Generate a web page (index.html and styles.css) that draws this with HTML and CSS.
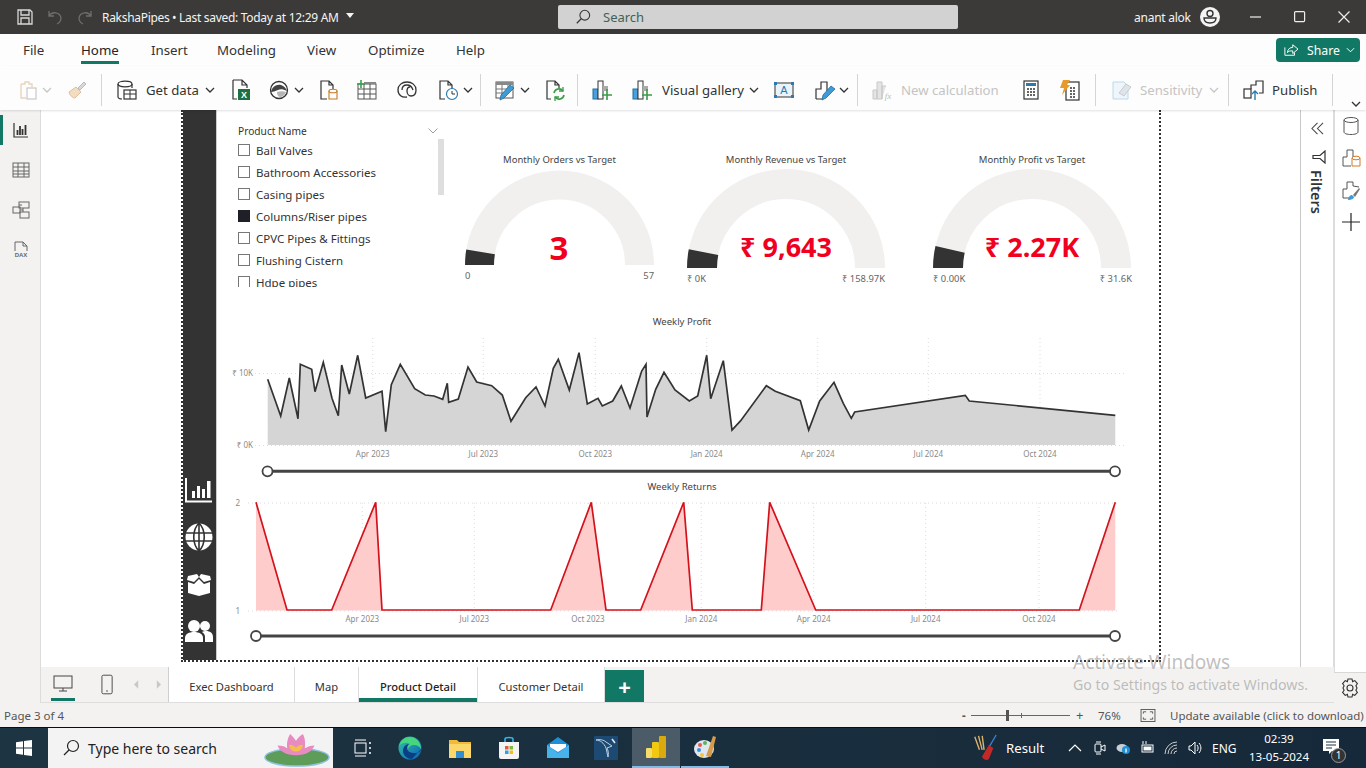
FILE: index.html
```html
<!DOCTYPE html>
<html lang="en">
<head>
<meta charset="utf-8">
<title>RakshaPipes</title>
<link rel="stylesheet" href="styles.css">
</head>
<body>
<div class="app">
  <header class="titlebar">
    <svg class="t-ic first" viewBox="0 0 18 18"><path d="M2 2h12l2 2v12H2z M5 2v5h8V2 M5 16v-6h8v6" fill="none" stroke="#d8d8d8" stroke-width="1.3"/></svg>
    <svg class="t-ic m12" viewBox="0 0 18 18"><path d="M3 3v5h5 M3 8c3-5 11-4 12 2 0 3-2 5-4 6" fill="none" stroke="#6e6e6e" stroke-width="1.3"/></svg>
    <svg class="t-ic m12" viewBox="0 0 18 18"><path d="M15 3v5h-5 M15 8c-3-5-11-4-12 2 0 3 2 5 4 6" fill="none" stroke="#6e6e6e" stroke-width="1.3"/></svg>
    <span class="doc-name">RakshaPipes</span>
    <span class="doc-saved">•&nbsp;Last saved: Today at 12:29 AM</span>
    <span class="doc-caret"></span>
    <div class="searchbox">
      <svg class="search-ic" viewBox="0 0 18 18"><circle cx="11" cy="7" r="5.5" fill="none" stroke="#333" stroke-width="1.2"/><path d="M7 11l-5 5" stroke="#333" stroke-width="1.3"/></svg>
      <span>Search</span>
    </div>
    <span class="user">anant alok</span>
    <svg class="avatar" viewBox="0 0 20 20"><circle cx="10" cy="10" r="10" fill="#f4f4f4"/><circle cx="10" cy="6.5" r="3" fill="none" stroke="#333" stroke-width="1.4"/><path d="M4 11h12c0 3.500-2.500 5-6 5s-6-1.500-6-5z" fill="none" stroke="#333" stroke-width="1.4"/></svg>
    <svg class="win-ic min" viewBox="0 0 12 12"><path d="M0 6h11" stroke="#eee" stroke-width="1.2"/></svg>
    <svg class="win-ic max" viewBox="0 0 12 12"><rect x=".6" y=".6" width="10" height="10" rx="1" fill="none" stroke="#eee" stroke-width="1.2"/></svg>
    <svg class="win-ic cls" viewBox="0 0 12 12"><path d="M.5.5l11 11M11.500.5l-11 11" stroke="#eee" stroke-width="1.2"/></svg>
  </header>

  <nav class="menubar">
    <span class="menu mi-file">File</span>
    <span class="menu mi-home active">Home</span>
    <span class="menu mi-insert">Insert</span>
    <span class="menu mi-model">Modeling</span>
    <span class="menu mi-view">View</span>
    <span class="menu mi-opt">Optimize</span>
    <span class="menu mi-help">Help</span>
    <div class="share">
      <svg class="share-ic" viewBox="0 0 18 16"><path d="M2 5v9h11v-3 M5 11c0-4 3-6 6-6V2l6 5-6 5V9c-3 0-5 0-6 2z" fill="none" stroke="#fff" stroke-width="1.100"/></svg>
      <span>Share</span>
      <svg class="share-chev" viewBox="0 0 10 6"><path d="M1 1l4 4 4-4" fill="none" stroke="#fff" stroke-width="1.100"/></svg>
    </div>
  </nav>

  <div class="toolbar">
    <svg class="ic" viewBox="0 0 22 22"><path d="M3 5h4V3h4v2h3v3 M3 5v14h5" fill="none" stroke="#e9d3b9" stroke-width="1.300"/><rect x="9" y="9" width="9" height="11" fill="#fff" stroke="#c9c9c9" stroke-width="1.200"/></svg>
    <svg class="chev m2 dim" viewBox="0 0 10 6"><path d="M1 1l4 4 4-4"/></svg>
    <svg class="ic m14" viewBox="0 0 22 22"><path d="M3 13l7-5 5 5-6 6c-2 0-5-2-6-6z" fill="#f2dcc2" stroke="#e2bf98"/><path d="M12 9l6-6 2 2-6 6z" fill="#d9d9d9" stroke="#bbb"/></svg>
    <i class="sep m13"></i>
    <svg class="ic m14" viewBox="0 0 22 22"><ellipse cx="9" cy="5" rx="7" ry="2.800" fill="none" stroke="#333" stroke-width="1.200"/><path d="M2 5v13c0 1 2 2 4 2 M16 5v4" fill="none" stroke="#333" stroke-width="1.200"/><rect x="8" y="11" width="12" height="9" fill="#fff" stroke="#333" stroke-width="1.200"/><path d="M8 15h12M14 11v9" stroke="#333"/></svg>
    <span class="lbl m8 w53">Get data</span>
    <svg class="chev m6" viewBox="0 0 10 6"><path d="M1 1l4 4 4-4"/></svg>
    <svg class="ic m15" viewBox="0 0 22 22"><path d="M3 1h9l5 5v3 M3 1v19h4 M12 1v5h5" fill="none" stroke="#333" stroke-width="1.200"/><rect x="8" y="10" width="12" height="11" fill="#1d7044"/><text class="xl" x="14" y="19" text-anchor="middle">X</text></svg>
    <svg class="ic m16" viewBox="0 0 22 22"><circle cx="11" cy="11" r="8.500" fill="none" stroke="#333" stroke-width="1.300"/><path d="M3 13c1-5 5-8 10-7 3 1 5 3 6 6-4-2-7-2-9-1-3 1-5 2-7 2z" fill="#444"/><path d="M9 13c3-1 6-1 9 0-1 3-4 5-6 5-2 0-3-3-3-5z" fill="#b5b5b5"/></svg>
    <svg class="chev m4" viewBox="0 0 10 6"><path d="M1 1l4 4 4-4"/></svg>
    <svg class="ic m14" viewBox="0 0 22 22"><path d="M9 20H3V2h8l4 4v4 M11 2v4h4" fill="none" stroke="#333" stroke-width="1.200"/><ellipse cx="15" cy="12" rx="4" ry="1.800" fill="#fff" stroke="#c77a22" stroke-width="1.100"/><path d="M11 12v8h8v-8" fill="none" stroke="#c77a22" stroke-width="1.100"/></svg>
    <svg class="ic m16" viewBox="0 0 22 22"><rect x="2" y="5" width="18" height="15" fill="#fff" stroke="#555"/><path d="M2 10h18M2 15h18M8 5v15M14 5v15" stroke="#555"/><rect x="8" y="3" width="12" height="2" fill="#888"/><path d="M5 1v8M1 5h8" stroke="#3c9e4e" stroke-width="1.600"/></svg>
    <svg class="ic m18" viewBox="0 0 22 22"><path d="M11 18c-5 1-9-2-9-7 0-5 4-8 9-8s9 3 9 8-3 6-5 6-4-2-4-5 1-4 3-4" fill="none" stroke="#333" stroke-width="1.300"/><path d="M6 11c0-3 2-5 5-5s5 2 6 5" fill="none" stroke="#333" stroke-width="1.300"/></svg>
    <svg class="ic m19" viewBox="0 0 22 22"><path d="M8 20H3V2h8l4 4v4 M11 2v4h4" fill="none" stroke="#333" stroke-width="1.200"/><circle cx="15" cy="15" r="5.500" fill="#fff" stroke="#2a7ab0" stroke-width="1.200"/><path d="M15 12v3h3" fill="none" stroke="#333"/></svg>
    <svg class="chev m4" viewBox="0 0 10 6"><path d="M1 1l4 4 4-4"/></svg>
    <i class="sep m7"></i>
    <svg class="ic m13" viewBox="0 0 22 22"><rect x="2" y="3" width="17" height="16" fill="#fff" stroke="#555"/><rect x="2" y="3" width="17" height="3" fill="#888"/><path d="M2 10h17M2 14h9M8 6v13M14 6v5" stroke="#777"/><path d="M6 21l1-5 9-10 4 3-10 10z" fill="#3f9bd6" stroke="#1f6e9f" stroke-width=".8"/></svg>
    <svg class="chev m4" viewBox="0 0 10 6"><path d="M1 1l4 4 4-4"/></svg>
    <svg class="ic m14" viewBox="0 0 22 22"><path d="M7 20H3V2h8l4 4v3 M11 2v4h4" fill="none" stroke="#333" stroke-width="1.200"/><path d="M10 14a5 5 0 0 1 9-2M20 16a5 5 0 0 1-9 2" fill="none" stroke="#3a9a45" stroke-width="1.600"/><path d="M19 8v4h-4M11 22v-4h4" fill="none" stroke="#3a9a45" stroke-width="1.300"/></svg>
    <i class="sep m11"></i>
    <svg class="ic m13" viewBox="0 0 22 22"><rect x="2" y="10" width="5" height="10" fill="#4b9fdc" stroke="#1f6e9f"/><rect x="7" y="2" width="5" height="18" fill="#fff" stroke="#333"/><rect x="12" y="7" width="5" height="5" fill="#aaa"/><path d="M16 10v11M11 16h10" stroke="#3a9a45" stroke-width="1.600"/></svg>
    <svg class="ic m18" viewBox="0 0 22 22"><rect x="2" y="10" width="5" height="10" fill="#4b9fdc" stroke="#1f6e9f"/><rect x="7" y="2" width="5" height="18" fill="#fff" stroke="#333"/><rect x="12" y="7" width="5" height="5" fill="#aaa"/><path d="M16 10v11M11 16h10" stroke="#3a9a45" stroke-width="1.600"/></svg>
    <span class="lbl m9 w82">Visual gallery</span>
    <svg class="chev m5" viewBox="0 0 10 6"><path d="M1 1l4 4 4-4"/></svg>
    <svg class="ic m14" viewBox="0 0 22 22"><rect x="2" y="4" width="18" height="14" fill="#eaf3fa" stroke="#333"/><path d="M2 4h2M18 4h2" stroke="#333"/><rect x="1" y="3" width="3" height="3" fill="#2a7ab0"/><rect x="18" y="3" width="3" height="3" fill="#2a7ab0"/><rect x="1" y="16" width="3" height="3" fill="#2a7ab0"/><rect x="18" y="16" width="3" height="3" fill="#2a7ab0"/><text class="tb-a" x="11" y="15" text-anchor="middle">A</text></svg>
    <svg class="ic m19" viewBox="0 0 22 22"><path d="M2 20V10h5V3h6v9 M2 20h7" fill="none" stroke="#333" stroke-width="1.200"/><path d="M8 21l1-5 8-9 4 3-9 9z" fill="#3f9bd6" stroke="#1f6e9f" stroke-width=".8"/></svg>
    <svg class="chev m3" viewBox="0 0 10 6"><path d="M1 1l4 4 4-4"/></svg>
    <i class="sep m8"></i>
    <svg class="ic m13" viewBox="0 0 22 22"><path d="M2 20V11h4v9zM6 20V3h5v17zM11 20V7h4" fill="#e4e4e4" stroke="#c8c8c8"/><text class="fx" x="17" y="20" text-anchor="middle">fx</text></svg>
    <span class="lbl m8 w98 off">New calculation</span>
    <svg class="ic m21" viewBox="0 0 22 22"><rect x="4" y="2" width="14" height="18" fill="#fff" stroke="#333" stroke-width="1.200"/><rect x="6" y="4" width="10" height="3" fill="#2a7ab0"/><path d="M7 10h2M10 10h2M13 10h2M7 13h2M10 13h2M13 13h2M7 16h2M10 16h2M13 16h2" stroke="#333" stroke-width="1.600"/></svg>
    <svg class="ic m17" viewBox="0 0 22 22"><rect x="7" y="3" width="13" height="18" fill="#fff" stroke="#333" stroke-width="1.200"/><path d="M11 9h2M14 9h2M11 12h2M14 12h2M11 15h2M14 15h2M11 18h2M14 18h2" stroke="#333" stroke-width="1.600"/><path d="M4 1h7L8 6h3L3 16l2-7H1z" fill="#e79a2a"/></svg>
    <i class="sep m14"></i>
    <svg class="ic m15" viewBox="0 0 22 22"><path d="M2 3h11l4 4v13H2z" fill="#eef6fb" stroke="#bcd8e8"/><path d="M8 14l7-9 5 3-7 9z" fill="#dfe4e8" stroke="#c6cdd2"/></svg>
    <span class="lbl m7 w62 off">Sensitivity</span>
    <svg class="chev m7 dim" viewBox="0 0 10 6"><path d="M1 1l4 4 4-4"/></svg>
    <i class="sep m9"></i>
    <svg class="ic m13" viewBox="0 0 22 22"><rect x="2" y="10" width="7" height="9" fill="#fff" stroke="#333" stroke-width="1.200"/><path d="M9 10V6h5V2h7v12h-4" fill="none" stroke="#333" stroke-width="1.200"/><path d="M13 21v-9M10 15l3-3 3 3" fill="none" stroke="#2a7ab0" stroke-width="1.400"/></svg>
    <span class="lbl m8 w45">Publish</span>
    <i class="sep m15"></i>
    <svg class="chev m18 collapse" viewBox="0 0 10 6"><path d="M1 1l4 4 4-4"/></svg>
  </div>

  <div class="middle">
    <aside class="leftrail">
      <svg class="rail-ic" viewBox="0 0 18 18"><path d="M2 2v14h14" fill="none" stroke="#333" stroke-width="1.200"/><path d="M5.500 14V9M8 14V5M10.500 14V8M13.500 14V4" stroke="#333" stroke-width="1.800"/></svg>
      <svg class="rail-ic" viewBox="0 0 18 18"><rect x="1" y="2" width="16" height="14" fill="none" stroke="#666"/><path d="M1 6h16M1 10h16M1 13h16M6 2v14M12 2v14" stroke="#666"/></svg>
      <svg class="rail-ic" viewBox="0 0 18 18"><rect x="7" y="1" width="10" height="6" fill="none" stroke="#666"/><rect x="1" y="6" width="7" height="6" fill="none" stroke="#666"/><rect x="8" y="11" width="9" height="6" fill="none" stroke="#666"/><path d="M7 4h3M8 9h3M11 7v4" stroke="#666"/></svg>
      <svg class="rail-ic" viewBox="0 0 18 18"><path d="M3 10V1h8l4 4v5 M11 1v4h4" fill="none" stroke="#666"/><text class="dax" x="9" y="16" text-anchor="middle">DAX</text></svg>
    </aside>

    <div class="center">
      <div class="workspace">
        <main class="canvas">
          <section class="report">
            <div class="navrail">
              <svg class="nav-ic" viewBox="0 0 30 30"><path d="M2 3v23.500h26" fill="none" stroke="#fff" stroke-width="2"/><path d="M8 16h3v7H8zM13 11h3v12h-3zM18 14h3v9h-3zM23 6h3.500v17H23z" fill="#fff"/></svg>
              <svg class="nav-ic" viewBox="0 0 30 30"><circle cx="15" cy="15" r="13.500" fill="#fff"/><path d="M1 11h28M1 19h28M15 1v28M15 1c-7 7-7 21 0 28M15 1c7 7 7 21 0 28" fill="none" stroke="#333" stroke-width="1.600"/></svg>
              <svg class="nav-ic" viewBox="0 0 30 30"><path d="M4 7l9-2 2 3-5 5-7-2zM26 7l-9-2-2 3 5 5 7-2z" fill="#fff"/><path d="M4 13l6 2 5-5 5 5 6-2v11l-11 3-11-3z" fill="#fff"/></svg>
              <svg class="nav-ic" viewBox="0 0 30 30"><circle cx="10" cy="10" r="6" fill="#fff"/><circle cx="21" cy="10" r="5" fill="#fff"/><path d="M1 26v-4c0-4 4-6 9-6s9 2 9 6v4z" fill="#fff"/><path d="M21 26v-5c0-2-1-4-3-5 1-1 3-1 4-1 4 0 7 2 7 6v5z" fill="#fff"/></svg>
            </div>
            <div class="visuals">
              <div class="toprow">
                <div class="slicer">
                  <div class="slicer-head"><span>Product Name</span><svg class="slicer-chev" viewBox="0 0 10 6"><path d="M.5.5L5 5 9.500.5"/></svg></div>
                  <div class="slicer-body">
                    <ul class="slicer-list">
                      <li><i class="cb"></i>Ball Valves</li>
                      <li><i class="cb"></i>Bathroom Accessories</li>
                      <li><i class="cb"></i>Casing pipes</li>
                      <li><i class="cb on"></i>Columns/Riser pipes</li>
                      <li><i class="cb"></i>CPVC Pipes &amp; Fittings</li>
                      <li><i class="cb"></i>Flushing Cistern</li>
                      <li><i class="cb"></i>Hdpe pipes</li>
                    </ul>
                    <i class="slicer-scroll"></i>
                  </div>
                </div>
                <svg class="gauge g1" viewBox="460 110 205 190">
                  <text class="ttl" x="559.500" y="163" text-anchor="middle">Monthly Orders vs Target</text>
                  <path class="g-bg g-w29" d="M479.500 265a80 80 0 0 1 160 0"/>
                  <path class="g-val g-w29" pathLength="180" stroke-dasharray="9.500 200" d="M479.500 265a80 80 0 0 1 160 0"/>
                  <text class="g-num g-big" x="559" y="260" text-anchor="middle">3</text>
                  <text class="g-lim" x="465" y="279">0</text>
                  <text class="g-lim" x="654" y="279" text-anchor="end">57</text>
                </svg>
                <svg class="gauge g2" viewBox="680 110 215 190">
                  <text class="ttl" x="786" y="163" text-anchor="middle">Monthly Revenue vs Target</text>
                  <path class="g-bg" d="M702 268a84 84 0 0 1 168 0"/>
                  <path class="g-val" pathLength="180" stroke-dasharray="10.900 200" d="M702 268a84 84 0 0 1 168 0"/>
                  <text class="g-num" x="786" y="257" text-anchor="middle">₹ 9,643</text>
                  <text class="g-lim" x="687" y="282">₹ 0K</text>
                  <text class="g-lim" x="885" y="282" text-anchor="end">₹ 158.97K</text>
                </svg>
                <svg class="gauge g3" viewBox="925 110 215 190">
                  <text class="ttl" x="1032" y="163" text-anchor="middle">Monthly Profit vs Target</text>
                  <path class="g-bg" d="M948 268a84 84 0 0 1 168 0"/>
                  <path class="g-val" pathLength="180" stroke-dasharray="12.900 200" d="M948 268a84 84 0 0 1 168 0"/>
                  <text class="g-num" x="1032" y="257" text-anchor="middle">₹ 2.27K</text>
                  <text class="g-lim" x="933" y="282">₹ 0.00K</text>
                  <text class="g-lim" x="1132" y="282" text-anchor="end">₹ 31.6K</text>
                </svg>
              </div>

              <svg class="chart" viewBox="220 310 910 170">
                <text class="ttl" x="682" y="325" text-anchor="middle">Weekly Profit</text>
                <path class="grid" d="M255 373.500H1126M255 445.500H1126M372.700 338V445M483.300 338V445M595.300 338V445M706.700 338V445M817.700 338V445M928.300 338V445M1040 338V445"/>
                <text class="ax" x="253" y="376" text-anchor="end">₹ 10K</text>
                <text class="ax" x="253" y="448" text-anchor="end">₹ 0K</text>
                <polygon class="area-gray" points="267.700,445 267.700,379.300 280.700,416 289.300,378 298,418.700 300.300,364.300 311.700,369.300 315,391.700 323.300,362.300 332,398.300 338.300,415.700 341.700,365 349.300,394 357.700,355.300 365.700,398 382,391.300 385.700,431.700 391.300,384.700 400.300,364.300 414.700,388.700 425.300,395 434,396 442.700,399.300 447.300,383.300 448.700,402.300 458.300,399 468,367 476.700,382 491.700,385.700 502.300,395 511,421.300 525.700,397.700 536,387 545,406 553.300,368.300 558.300,359.300 569.300,390 579,352.700 587.300,404 598,398.300 602.300,406 612.700,401 621.300,386 630,408 641.700,371 646,364.300 647,417 655.700,389.300 664,372.300 675,390 689.300,401 697.700,396 706.700,355.300 710.700,398.700 723.300,360.700 732,430 740.700,420.700 766.300,385.700 775.300,391.300 800.300,400.700 808.700,430 819.700,401 834,382.300 843.300,403.300 851.300,418.300 854.700,412 965.300,395.300 969.300,401 1115.300,415.300 1115.300,445"/>
                <polyline class="line-dark" points="267.700,379.300 280.700,416 289.300,378 298,418.700 300.300,364.300 311.700,369.300 315,391.700 323.300,362.300 332,398.300 338.300,415.700 341.700,365 349.300,394 357.700,355.300 365.700,398 382,391.300 385.700,431.700 391.300,384.700 400.300,364.300 414.700,388.700 425.300,395 434,396 442.700,399.300 447.300,383.300 448.700,402.300 458.300,399 468,367 476.700,382 491.700,385.700 502.300,395 511,421.300 525.700,397.700 536,387 545,406 553.300,368.300 558.300,359.300 569.300,390 579,352.700 587.300,404 598,398.300 602.300,406 612.700,401 621.300,386 630,408 641.700,371 646,364.300 647,417 655.700,389.300 664,372.300 675,390 689.300,401 697.700,396 706.700,355.300 710.700,398.700 723.300,360.700 732,430 740.700,420.700 766.300,385.700 775.300,391.300 800.300,400.700 808.700,430 819.700,401 834,382.300 843.300,403.300 851.300,418.300 854.700,412 965.300,395.300 969.300,401 1115.300,415.300"/>
                <text class="ax" x="372.700" y="457" text-anchor="middle">Apr 2023</text>
                <text class="ax" x="483.300" y="457" text-anchor="middle">Jul 2023</text>
                <text class="ax" x="595.300" y="457" text-anchor="middle">Oct 2023</text>
                <text class="ax" x="706.700" y="457" text-anchor="middle">Jan 2024</text>
                <text class="ax" x="817.700" y="457" text-anchor="middle">Apr 2024</text>
                <text class="ax" x="928.300" y="457" text-anchor="middle">Jul 2024</text>
                <text class="ax" x="1040" y="457" text-anchor="middle">Oct 2024</text>
                <path class="track" d="M267 471.300H1115"/>
                <circle class="knob" cx="267.500" cy="471.300" r="5"/>
                <circle class="knob" cx="1115" cy="471.300" r="5"/>
              </svg>

              <svg class="chart" viewBox="220 480 910 170">
                <text class="ttl" x="682" y="490" text-anchor="middle">Weekly Returns</text>
                <path class="grid" d="M248 503H1120M248 611H1120M362.300 503V611M474.300 503V611M588 503V611M701.300 503V611M813.700 503V611M925.700 503V611M1039 503V611"/>
                <text class="ax" x="240" y="506" text-anchor="end">2</text>
                <text class="ax" x="240" y="614" text-anchor="end">1</text>
                <polygon class="area-red" points="256,610.500 256,502.300 287,610 331.700,610 375.700,502.300 382,610 550.700,610 591.300,502.300 606,610 640.700,610 683.700,502.300 692.300,610 761.300,610 769.700,502.300 815.700,610 1079.300,610 1115.300,502.300 1115.300,610.500"/>
                <polyline class="line-red" points="256,502.300 287,610 331.700,610 375.700,502.300 382,610 550.700,610 591.300,502.300 606,610 640.700,610 683.700,502.300 692.300,610 761.300,610 769.700,502.300 815.700,610 1079.300,610 1115.300,502.300"/>
                <text class="ax" x="362.300" y="622" text-anchor="middle">Apr 2023</text>
                <text class="ax" x="474.300" y="622" text-anchor="middle">Jul 2023</text>
                <text class="ax" x="588" y="622" text-anchor="middle">Oct 2023</text>
                <text class="ax" x="701.300" y="622" text-anchor="middle">Jan 2024</text>
                <text class="ax" x="813.700" y="622" text-anchor="middle">Apr 2024</text>
                <text class="ax" x="925.700" y="622" text-anchor="middle">Jul 2024</text>
                <text class="ax" x="1039" y="622" text-anchor="middle">Oct 2024</text>
                <path class="track" d="M256 636H1115"/>
                <circle class="knob" cx="256" cy="636" r="5"/>
                <circle class="knob" cx="1115" cy="636" r="5"/>
              </svg>
            </div>
          </section>
        </main>
        <aside class="filters">
          <svg class="filters-ic" viewBox="0 0 14 14"><path d="M7 1L1 7l6 6M13 1L7 7l6 6" fill="none" stroke="#444" stroke-width="1.100"/></svg>
          <svg class="filters-fn" viewBox="0 0 14 14"><path d="M13 1v12L8 8.500H1v-3h7z" fill="none" stroke="#333" stroke-width="1.200"/></svg>
          <span class="filters-text">Filters</span>
        </aside>
      </div>

      <div class="tabbar">
        <div class="tab-tools">
          <div class="tool-desktop">
            <svg class="tool-ic" viewBox="0 0 20 20"><rect x="1" y="3" width="18" height="12" fill="none" stroke="#444"/><path d="M10 15v3M6 18h8" stroke="#444"/></svg>
          </div>
          <svg class="tool-phone" viewBox="0 0 14 22"><rect x="1" y="1" width="11" height="20" rx="1.500" fill="none" stroke="#444"/><path d="M5.500 18h2" stroke="#444"/></svg>
          <svg class="tool-arrow" viewBox="0 0 6 10"><path d="M5 0v10L0 5z"/></svg>
          <svg class="tool-arrow ar2" viewBox="0 0 6 10"><path d="M1 0v10l5-5z"/></svg>
        </div>
        <div class="tab t1">Exec Dashboard</div>
        <div class="tab t2">Map</div>
        <div class="tab t3 current">Product Detail</div>
        <div class="tab t4">Customer Detail</div>
        <div class="tab-add">+</div>
      </div>
    </div>

    <aside class="rightcol">
      <svg class="rc-ic" viewBox="0 0 20 20"><ellipse cx="10" cy="4" rx="7" ry="2.500" fill="none" stroke="#555"/><path d="M3 4v12c0 1.500 3 2.500 7 2.500s7-1 7-2.500V4" fill="none" stroke="#555"/></svg>
      <svg class="rc-ic" viewBox="0 0 20 20"><path d="M2 18V9h4V2h6v7 M2 18h8" fill="none" stroke="#555"/><ellipse cx="15" cy="10" rx="4" ry="1.800" fill="none" stroke="#d47a2a"/><path d="M11 10v8h8v-8" fill="none" stroke="#d47a2a"/></svg>
      <svg class="rc-ic" viewBox="0 0 20 20"><path d="M2 18V9h4V2h6v4l6 1 M2 18h6" fill="none" stroke="#555"/><path d="M7 20c0-3 2-5 4-5l2 2c0 2-3 3-6 3z" fill="#3f9bd6"/><path d="M12 15l6-7 1 1-5 8z" fill="#777"/></svg>
      <svg class="rc-ic" viewBox="0 0 20 20"><path d="M10 1v18M1 10h18" stroke="#222" stroke-width="1.200"/></svg>
      <div class="rc-gear">
        <svg class="gear-ic" viewBox="0 0 20 20"><path d="M8 1h4l.6 2.600 2.200-1 2.600 3-1.500 2.200 1.100 2.200-1.100 2.200 1.500 2.200-2.600 3-2.200-1-.6 2.600H8l-.6-2.600-2.200 1-2.600-3 1.500-2.200L3 10l1.100-2.200-1.500-2.200 2.600-3 2.200 1z" fill="none" stroke="#333" stroke-width="1.100"/><circle cx="10" cy="10" r="3" fill="none" stroke="#333" stroke-width="1.100"/></svg>
      </div>
    </aside>
  </div>

  <div class="statusbar">
    <span class="page-of">Page 3 of 4</span>
    <span class="zoom-minus">-</span>
    <div class="zoom-slider"><i class="zoom-thumb"></i><i class="zoom-tick"></i></div>
    <span class="zoom-plus">+</span>
    <span class="zoom-val">76%</span>
    <svg class="fit-ic" viewBox="0 0 16 14"><rect x=".5" y=".5" width="15" height="13" fill="none" stroke="#555"/><path d="M3 5V3h3M13 5V3h-3M3 9v2h3M13 9v2h-3" fill="none" stroke="#555"/></svg>
    <span class="update">Update available (click to download)</span>
  </div>

  <footer class="taskbar">
    <svg class="tb-win" viewBox="0 0 16 16"><path d="M0 2.200l7-1v6.300H0zM8 1l8-1v7.500H8zM0 8.500h7v6.300l-7-1zM8 8.500h8V16l-8-1z" fill="#fff"/></svg>
    <div class="tb-search">
      <svg class="tb-search-ic" viewBox="0 0 18 18"><circle cx="11" cy="7" r="5.500" fill="none" stroke="#222" stroke-width="1.200"/><path d="M7 11l-5 5" stroke="#222" stroke-width="1.300"/></svg>
      <span>Type here to search</span>
      <svg class="lotus" viewBox="0 0 70 36"><ellipse cx="36" cy="26" rx="33" ry="9" fill="#5e9c5a" stroke="#8fc0e2" stroke-width="1.500"/><path d="M35 24c-10 0-17-4-19-10 5 0 8 1 10 3-1-6 1-12 3-15 2 2 4 4 6 7 2-3 4-5 7-7 2 3 3 9 2 15 3-2 6-3 10-3-2 6-9 10-19 10z" fill="#e88bc0"/><path d="M35 20c-4 0-7-3-7-7 3 0 5 1 7 3 2-2 4-3 7-3 0 4-3 7-7 7z" fill="#f3c04c"/></svg>
    </div>
    <svg class="tb-ic tv" viewBox="0 0 20 20"><path d="M3 2h11M3 18h11" stroke="#fff"/><rect x="3" y="5" width="11" height="10" fill="none" stroke="#fff"/><path d="M18 4v2M18 9v2M18 14v2" stroke="#fff" stroke-width="1.500"/></svg>
    <svg class="tb-ic edge" viewBox="0 0 24 24"><defs><linearGradient id="edgeg" x1="0" y1="0" x2="1" y2="1"><stop offset="0" stop-color="#35c1a5"/><stop offset="1" stop-color="#0b63b5"/></linearGradient></defs><circle cx="12" cy="12" r="11.500" fill="url(#edgeg)"/><path d="M23 13c0 3-3 4-6 4-5 0-8-2-8-5 0-2 1-3 2-4-3 0-6 3-6 7 0 5 5 8 9 8" fill="#0a3f86"/><path d="M10 14c0-3 3-5 6-5 3 0 5 1 7 4 0-7-5-12-11-12S3 5 1 10c3-4 8-4 11-2-2 1-3 3-2 6z" fill="#45d67e"/></svg>
    <svg class="tb-ic expl" viewBox="0 0 24 24"><path d="M1 4h8l2 2h12v16H1z" fill="#f3b93b"/><path d="M1 8h22v14H1z" fill="#fcd769"/><rect x="8" y="15" width="8" height="7" fill="#2f8fd0"/></svg>
    <svg class="tb-ic store" viewBox="0 0 24 24"><path d="M8 6V3c0-2 8-2 8 0v3" fill="none" stroke="#35b3e5" stroke-width="1.600"/><path d="M2 6h20v15a2 2 0 0 1-2 2H4a2 2 0 0 1-2-2z" fill="#f4f4f4"/><rect x="8" y="10" width="3.500" height="3.500" fill="#e95a35"/><rect x="12.500" y="10" width="3.500" height="3.500" fill="#7dbb42"/><rect x="8" y="14.500" width="3.500" height="3.500" fill="#2ba3e3"/><rect x="12.500" y="14.500" width="3.500" height="3.500" fill="#f8bb1d"/></svg>
    <svg class="tb-ic mail" viewBox="0 0 24 24"><path d="M1 9L12 1l11 8v13H1z" fill="#1f8fd6"/><path d="M1 9l11 8 11-8v13H1z" fill="#48b2ea"/><path d="M4 8h16v3l-8 5-8-5z" fill="#fff"/></svg>
    <svg class="tb-ic sql" viewBox="0 0 24 24"><rect x="0" y="0" width="24" height="24" rx="1" fill="#1d4a73"/><path d="M2 4c4 0 8 3 10 8l2 9c1-3 0-7-1-9l5-2-6-4C10 4 6 3 2 4z" fill="none" stroke="#bcd0df" stroke-width="1"/><path d="M18 3l3 4" stroke="#e8e8e8" stroke-width="1.600"/></svg>
    <div class="tb-pbi">
      <svg class="tb-ic pbi" viewBox="0 0 24 24"><rect x="2" y="13" width="6" height="10" rx="1" fill="#f6dd6a"/><rect x="8" y="7" width="7" height="16" rx="1" fill="#f2c811"/><rect x="15" y="1" width="7" height="22" rx="1" fill="#d9a90e"/></svg>
    </div>
    <div class="tb-paint">
      <svg class="tb-ic paint" viewBox="0 0 24 24"><ellipse cx="11" cy="14" rx="10" ry="9" fill="#dfe8ee"/><circle cx="7" cy="10" r="2" fill="#e75b4e"/><circle cx="12" cy="8" r="2" fill="#59b45d"/><circle cx="6" cy="15" r="2" fill="#3a8fd8"/><circle cx="9" cy="20" r="2" fill="#f2c43a"/><path d="M13 21l7-20 3 1-5 20z" fill="#d59a4a"/></svg>
    </div>
    <svg class="tb-bat" viewBox="0 0 28 30"><path d="M3 3l5 14M7 2l4 15M11 2l2 15" stroke="#d9b36a" stroke-width="1.500"/><path d="M26 1L16 18" stroke="#3a80d0" stroke-width="1.500"/><path d="M18 12l5 3-5 12c-3 2-7 0-7-3z" fill="#c32a27"/></svg>
    <span class="tb-result">Result</span>
    <div class="tray">
      <svg class="tray-ic" viewBox="0 0 14 14"><path d="M1 10l6-6 6 6" fill="none" stroke="#fff" stroke-width="1.200"/></svg>
      <svg class="tray-ic" viewBox="0 0 14 14"><rect x="3" y="3" width="6" height="8" rx="1" fill="none" stroke="#fff"/><path d="M9 6l4-2v6l-4-2M4 1h5M4 13h5" fill="none" stroke="#fff"/></svg>
      <svg class="tray-ic" viewBox="0 0 14 14"><ellipse cx="6" cy="7" rx="5.500" ry="4" fill="#c7ced4"/><circle cx="10" cy="9" r="4" fill="#1f8fd6"/><path d="M10 7.500v4" stroke="#fff" stroke-width="1.300"/></svg>
      <svg class="tray-ic" viewBox="0 0 14 14"><rect x="2" y="4" width="11" height="7" fill="none" stroke="#fff"/><rect x="3.500" y="5.500" width="8" height="4" fill="#fff"/><path d="M3 0v3M6 0v3" stroke="#fff"/></svg>
      <svg class="tray-ic" viewBox="0 0 14 14"><path d="M1 13a12 12 0 0 1 12-12M4 13a9 9 0 0 1 9-9M7 13a6 6 0 0 1 6-6M10 13a3 3 0 0 1 3-3" fill="none" stroke="#ddd" stroke-width=".9"/></svg>
      <svg class="tray-ic" viewBox="0 0 14 14"><path d="M1 5h2l4-4v12l-4-4H1z" fill="none" stroke="#fff"/><path d="M9 4c1.500 2 1.500 4 0 6M11 2c2.500 3 2.500 7 0 10" fill="none" stroke="#fff"/></svg>
    </div>
    <span class="tb-eng">ENG</span>
    <div class="tb-clock"><span>02:39</span><span>13-05-2024</span></div>
    <div class="tb-notif">
      <svg class="notif-ic" viewBox="0 0 16 16"><path d="M0 0h16v12H9l-3 3v-3H0z" fill="#fff"/><path d="M3 3h10M3 6h10M3 9h6" stroke="#1d3445"/></svg>
      <span class="notif-badge">1</span>
    </div>
  </footer>

  <div class="watermark">
    <div class="wm-big">Activate Windows</div>
    <div class="wm-small">Go to Settings to activate Windows.</div>
  </div>
</div>
</body>
</html>
```
FILE: styles.css
```css
* { box-sizing: border-box; }
html, body { margin: 0; padding: 0; }
body { width: 1366px; height: 768px; overflow: hidden; font-family: "Noto Sans", "Open Sans", sans-serif; color: #252423; background: #fff; }
.app { position: relative; width: 1366px; height: 768px; display: flex; flex-direction: column; }

/* title bar */
.titlebar { height: 34px; background: #3b3a39; display: flex; align-items: center; color: #f4f4f4; font-size: 12px; flex: none; }
.t-ic { width: 18px; height: 18px; flex: none; }
.t-ic.first { margin-left: 16px; }
.t-ic.m12 { margin-left: 12px; }
.doc-name { margin-left: 8px; width: 66px; white-space: nowrap; letter-spacing: -.3px; }
.doc-saved { margin-left: 4px; width: 167px; white-space: nowrap; letter-spacing: -.3px; }
.doc-caret { margin-left: 7px; margin-bottom: 4px; border: 4.5px solid transparent; border-top: 5px solid #f4f4f4; border-bottom: 0; }
.searchbox { margin-left: 204px; width: 400px; height: 24px; background: #d2d2d2; border-radius: 2px; display: flex; align-items: center; padding-left: 17px; color: #3f6358; font-size: 13px; }
.search-ic { width: 16px; height: 16px; margin-right: 12px; }
.user { margin-left: 176px; width: 57px; white-space: nowrap; font-size: 12px; letter-spacing: -.25px; }
.avatar { width: 20px; height: 20px; margin-left: 9px; }
.win-ic { width: 12px; height: 12px; flex: none; }
.win-ic.min { margin-left: 30px; }
.win-ic.max { margin-left: 32px; }
.win-ic.cls { margin-left: 32px; }

/* menu */
.menubar { height: 32px; background: #fdfdfd; display: flex; align-items: center; font-size: 13.300px; flex: none; position: relative; }
.menu { white-space: nowrap; position: relative; color: #333; line-height: 32px; }
.mi-file { margin-left: 23px; width: 20px; }
.mi-home { margin-left: 38px; width: 38px; color: #252423; }
.mi-insert { margin-left: 32px; width: 34px; }
.mi-model { margin-left: 32px; width: 58px; }
.mi-view { margin-left: 32px; width: 30px; }
.mi-opt { margin-left: 31px; width: 56px; }
.mi-help { margin-left: 32px; width: 28px; }
.menu.active::after { content: ""; position: absolute; left: 0; right: 0; bottom: 2px; height: 3px; background: #117865; }
.share { margin-left: 792px; width: 84px; height: 24px; background: #117865; border-radius: 4px; display: flex; align-items: center; color: #fff; font-size: 12.300px; padding-left: 7px; }
.share-ic { width: 16px; height: 14px; margin-right: 8px; flex: none; }
.share-chev { width: 9px; height: 6px; margin-left: 6px; flex: none; }

/* toolbar */
.toolbar { height: 44px; background: #fdfdfd; display: flex; align-items: center; padding-left: 18px; padding-top: 4px; font-size: 13.200px; flex: none; box-shadow: 0 1px 2px rgba(0,0,0,.12); position: relative; z-index: 2; }
.ic { width: 22px; height: 22px; flex: none; }
.chev { width: 10px; height: 6px; flex: none; }
.chev path { fill: none; stroke: #333; stroke-width: 1.300; }
.chev.dim path { stroke: #c6c6c6; }
.chev.collapse { align-self: flex-end; margin-bottom: 3px; }
.sep { width: 1px; height: 32px; background: #d4d4d4; flex: none; }
.lbl { white-space: nowrap; flex: none; color: #333; }
.lbl.off { color: #c4c4c4; }
.w53 { width: 53px; } .w82 { width: 82px; } .w98 { width: 98px; } .w62 { width: 62px; } .w45 { width: 45px; }
.m2 { margin-left: 2px; } .m3 { margin-left: 3px; } .m4 { margin-left: 4px; } .m5 { margin-left: 5px; }
.m6 { margin-left: 6px; } .m7 { margin-left: 7px; } .m8 { margin-left: 8px; } .m9 { margin-left: 9px; }
.m11 { margin-left: 11px; } .m13 { margin-left: 13px; } .m14 { margin-left: 14px; } .m15 { margin-left: 15px; }
.m16 { margin-left: 16px; } .m17 { margin-left: 17px; } .m18 { margin-left: 18px; } .m19 { margin-left: 19px; } .m21 { margin-left: 21px; }
.xl { font: bold 9px "Liberation Sans", sans-serif; fill: #fff; }
.tb-a { font: 11px "Liberation Sans", sans-serif; fill: #2a7ab0; }
.fx { font: italic 9px "Liberation Serif", serif; fill: #bbb; }
.dax { font: bold 6px "Liberation Sans", sans-serif; fill: #666; }

/* middle */
.middle { flex: 1; display: flex; min-height: 0; background: #fff; }
.leftrail { width: 41px; flex: none; background: #f3f2f1; border-right: 1px solid #dcdcdc; display: flex; flex-direction: column; align-items: center; padding-top: 11px; padding-left: 2px; gap: 22px; position: relative; }
.rail-ic { width: 18px; height: 18px; flex: none; }
.leftrail::before { content: ""; position: absolute; left: 0; top: 5px; width: 3px; height: 30px; background: #117865; }
.center { flex: 1; display: flex; flex-direction: column; min-width: 0; }
.workspace { height: 557px; display: flex; flex: none; }
.canvas { flex: 1; background: #fff; padding-left: 140px; overflow: hidden; }
.report { width: 980px; height: 552px; border: 2px dotted #333; border-top: 0; display: flex; background: #fff; }
.navrail { width: 34px; flex: none; background: #333; display: flex; flex-direction: column; justify-content: flex-end; align-items: center; gap: 17px; padding-bottom: 14px; padding-right: 1px; border-right: 1px solid #ccc; }
.nav-ic { width: 30px; height: 30px; flex: none; }
.visuals { flex: 1; display: flex; flex-direction: column; padding-left: 3px; }
.toprow { height: 200px; display: flex; flex: none; }
.gauge { height: 190px; flex: none; }
.gauge.g1 { width: 205px; margin-left: 0; }
.gauge.g2 { width: 215px; margin-left: 15px; }
.gauge.g3 { width: 215px; margin-left: 30px; }
.chart { width: 910px; height: 170px; flex: none; }
.ttl { font-size: 9.500px; fill: #444; }
.g-bg, .g-val { fill: none; stroke-width: 30; }
.g-bg { stroke: #f1f0ef; }
.g-val { stroke: #333; }
.g-w29 { stroke-width: 29; }
.g-num { font-size: 27px; font-weight: 700; fill: #f0001e; }
.g-big { font-size: 33px; }
.g-lim { font-size: 9.400px; fill: #666; }
.ax { font-size: 8px; fill: #8a8a8a; }
.grid { fill: none; stroke: #dcdcdc; stroke-width: 1; stroke-dasharray: 1 3; }
.area-gray { fill: #d5d5d5; }
.line-dark { fill: none; stroke: #333; stroke-width: 1.700; stroke-linejoin: miter; }
.area-red { fill: #ffcccc; }
.line-red { fill: none; stroke: #d4121c; stroke-width: 1.700; }
.track { stroke: #444; stroke-width: 3; fill: none; }
.knob { fill: #fff; stroke: #444; stroke-width: 1.800; }

/* slicer */
.slicer { width: 240px; padding: 15px 16px 0 18px; flex: none; }
.slicer-head { display: flex; justify-content: space-between; align-items: center; height: 12px; font-size: 10.200px; color: #333; }
.slicer-chev { width: 10px; height: 6px; margin-right: 6px; }
.slicer-chev path { fill: none; stroke: #888; stroke-width: .8; }
.slicer-body { display: flex; height: 148px; margin-top: 2px; position: relative; overflow: hidden; }
.slicer-list { list-style: none; margin: 0; padding: 0; flex: 1; overflow: hidden; }
.slicer-list li { height: 22px; display: flex; align-items: center; font-size: 11.500px; color: #333; white-space: nowrap; }
.cb { width: 12px; height: 12px; border: 1px solid #777; margin-right: 6px; flex: none; background: #fff; }
.cb.on { background: #1f1f28; border-color: #1f1f28; }
.slicer-scroll { position: absolute; right: 0; top: 0; width: 6px; height: 56px; background: #dedede; }

/* filters and right col */
.filters { width: 34px; flex: none; border-left: 1px solid #c8c8c8; border-right: 1px solid #dcdcdc; background: #fff; display: flex; flex-direction: column; align-items: center; padding-top: 12px; }
.filters-ic { width: 13px; height: 13px; }
.filters-fn { width: 14px; height: 14px; margin-top: 15px; margin-left: 3px; }
.filters-text { writing-mode: vertical-rl; font-size: 14.500px; font-weight: 600; margin-top: 6px; color: #333; line-height: 14px; }
.rightcol { width: 32px; flex: none; background: #fff; display: flex; flex-direction: column; align-items: center; padding-top: 6px; gap: 12px; border-left: 1px solid #dcdcdc; position: relative; }
.rc-ic { width: 20px; height: 20px; flex: none; }
.rc-gear { position: absolute; left: -1px; right: 0; bottom: 0; height: 31px; border-top: 1px solid #d8d8d8; background: #f3f2f1; display: flex; align-items: center; justify-content: center; }
.gear-ic { width: 20px; height: 20px; }

/* tabs */
.tabbar { height: 36px; flex: none; background: #f3f2f1; display: flex; border-bottom: 1px solid #dedede; }
.tab-tools { width: 128px; display: flex; align-items: center; flex: none; border-right: 1px solid #cfcfcf; position: relative; }
.tool-desktop { margin-left: 10px; width: 24px; height: 32px; display: flex; justify-content: center; align-items: center; border-bottom: 3px solid #117865; }
.tool-ic { width: 20px; height: 20px; }
.tool-phone { width: 13px; height: 21px; margin-left: 26px; }
.tool-arrow { width: 5px; height: 9px; margin-left: 20px; fill: #c8c8c8; }
.tool-arrow.ar2 { margin-left: 17px; }
.tab { background: #fff; display: flex; align-items: center; justify-content: center; font-size: 11.200px; padding-top: 3px; border-right: 1px solid #dcdcdc; color: #333; flex: none; white-space: nowrap; }
.t1 { width: 126px; } .t2 { width: 64px; } .t3 { width: 119px; } .t4 { width: 127px; }
.tab.current { box-shadow: inset 0 -4px 0 #117865; font-weight: 500; color: #252423; }
.tab-add { width: 39px; height: 32px; margin-top: 3px; background: #117865; color: #fff; font-size: 22px; font-weight: 700; display: flex; align-items: center; justify-content: center; line-height: 1; }

/* status */
.statusbar { height: 24px; flex: none; background: #f3f2f1; display: flex; align-items: center; font-size: 11.500px; color: #555; padding-left: 4px; }
.page-of { width: 60px; white-space: nowrap; }
.zoom-minus { margin-left: 898px; width: 8px; font-weight: 700; }
.zoom-slider { margin-left: 1px; width: 99px; height: 1px; background: #666; position: relative; }
.zoom-thumb { position: absolute; left: 35px; top: -5px; width: 3px; height: 11px; background: #555; }
.zoom-tick { position: absolute; left: 50px; top: -2px; width: 1px; height: 5px; background: #666; }
.zoom-plus { margin-left: 6px; width: 10px; font-size: 13px; }
.zoom-val { margin-left: 12px; width: 26px; white-space: nowrap; }
.fit-ic { width: 16px; height: 13px; margin-left: 16px; flex: none; }
.update { margin-left: 14px; white-space: nowrap; }

/* taskbar */
.taskbar { height: 41px; flex: none; background: linear-gradient(90deg, #1d3442, #16293a); border-top: 1px solid #0d0d0d; display: flex; align-items: center; color: #fff; }
.tb-win { width: 16px; height: 16px; margin-left: 16px; flex: none; }
.tb-search { margin-left: 16px; width: 285px; height: 40px; background: #f3f3f3; display: flex; align-items: center; color: #222; font-size: 14px; padding-left: 14px; position: relative; flex: none; }
.tb-search-ic { width: 18px; height: 18px; margin-right: 8px; }
.lotus { position: absolute; right: 3px; top: 4px; width: 68px; height: 35px; }
.tb-ic { width: 24px; height: 24px; flex: none; }
.tv { width: 20px; height: 20px; margin-left: 19px; }
.edge { margin-left: 26px; }
.expl { margin-left: 26px; }
.store { margin-left: 25px; }
.mail { margin-left: 25px; }
.sql { margin-left: 24px; }
.tb-pbi { margin-left: 14px; width: 48px; height: 40px; background: #4b5c68; display: flex; justify-content: center; align-items: center; border-bottom: 2px solid #7fbde8; flex: none; }
.tb-paint { margin-left: 1px; width: 48px; height: 40px; display: flex; justify-content: center; align-items: center; border-bottom: 2px solid #7fbde8; flex: none; }
.tb-bat { width: 26px; height: 28px; margin-left: 243px; flex: none; }
.tb-result { margin-left: 8px; font-size: 13.200px; width: 38px; white-space: nowrap; }
.tray { margin-left: 24px; display: flex; gap: 10px; flex: none; }
.tray-ic { width: 14px; height: 14px; }
.tb-eng { margin-left: 10px; font-size: 12px; width: 26px; white-space: nowrap; }
.tb-clock { margin-left: 10px; width: 62px; display: flex; flex-direction: column; align-items: center; font-size: 11.500px; line-height: 18px; white-space: nowrap; }
.tb-notif { margin-left: 11px; width: 24px; height: 30px; position: relative; flex: none; }
.notif-ic { position: absolute; left: 2px; top: 6px; width: 16px; height: 16px; }
.notif-badge { position: absolute; right: -1px; bottom: 0; width: 15px; height: 15px; border-radius: 50%; background: #333; border: 1px solid #999; color: #fff; font-size: 10px; line-height: 13px; text-align: center; }

/* watermark */
.watermark { position: absolute; left: 1073px; top: 650px; color: rgba(150,150,150,.6); white-space: nowrap; z-index: 5; }
.wm-big { font-size: 19px; line-height: 24px; }
.wm-small { font-size: 14.200px; line-height: 22px; }
```
